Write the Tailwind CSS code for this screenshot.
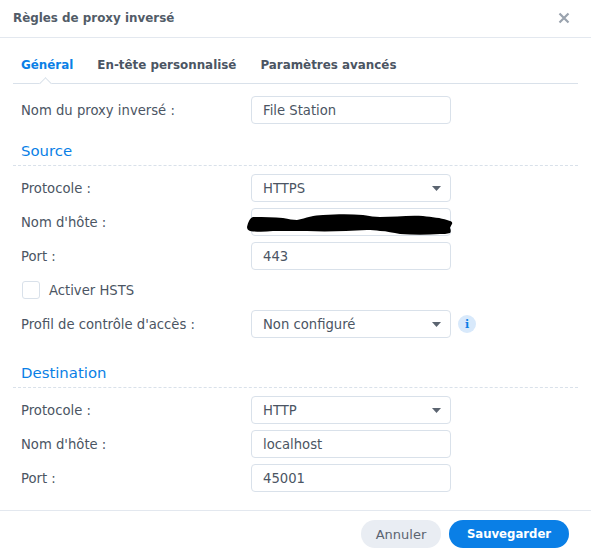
<!doctype html>
<html>
  <head>
    <title>Règles de proxy inversé</title>
    <meta charset="UTF-8" />
    <script src="https://cdn.jsdelivr.net/npm/@tailwindcss/browser@4"></script>
  </head>
  <body class="bg-white font-['DejaVu_Sans',sans-serif] text-[13.2px] text-[#4b5563]">
    <div class="w-[591px] h-[555px] flex flex-col overflow-hidden">
      <!--Title-->
      <div class="h-[38px] shrink-0 border-b border-[#e3e8ef] pl-[13px] pr-[20px] flex items-center justify-between">
        <h1 class="font-bold text-[11.9px] text-[#525c68]">Règles de proxy inversé</h1>
        <svg width="12" height="12" viewBox="0 0 12 12" class="mr-[1px] mt-[-2px]">
          <path d="M1.5 1.5l9 9M10.5 1.5l-9 9" stroke="#9aa3ae" stroke-width="2.2" fill="none" />
        </svg>
      </div>
      <div class="grow px-[13px] flex flex-col">
        <!--Tabs-->
        <div class="h-[46px] shrink-0 border-b border-[#d9e1ea] flex items-center gap-[24px] pl-[8px] pt-[10px] font-bold text-[11.9px] relative">
          <span class="text-[#0a7fe6]">Général</span>
          <span>En-tête personnalisé</span>
          <span>Paramètres avancés</span>
          <div class="absolute left-[28px] bottom-[-5px] w-[9px] h-[9px] rotate-45 bg-white border-l border-t border-[#d9e1ea]"></div>
        </div>
        <div class="pl-[8px] pt-[12px]">
          <div class="flex items-center h-[28px]">
            <label class="w-[230px] pt-[2px]">Nom du proxy inversé :</label>
            <div class="w-[200px] h-[28px] border border-[#d9e1ea] rounded-[4px] px-[11px] pt-[2px] flex items-center">File Station</div>
          </div>
          <h2 class="text-[14.9px] text-[#0a7fe6] mt-[15px] pt-[1px] h-[26px] leading-[22px]">Source</h2>
          <div class="border-b border-dashed border-[#d9e1ea] -ml-[8px] mb-[8px]"></div>
          <div class="flex flex-col gap-[6px]">
            <div class="flex items-center h-[28px]">
              <label class="w-[230px] pt-[2px]">Protocole :</label>
              <div class="w-[200px] h-[28px] border border-[#d9e1ea] rounded-[4px] pl-[11px] pr-[9px] flex items-center justify-between">
                <span class="pt-[2px]">HTTPS</span>
                <svg width="9" height="5" viewBox="0 0 9 5"><path d="M0 0h9L4.5 5z" fill="#5b6470" /></svg>
              </div>
            </div>
            <div class="flex items-center h-[28px]">
              <label class="w-[230px] pt-[2px]">Nom d'hôte :</label>
              <div class="w-[200px] h-[28px] border border-[#d9e1ea] rounded-[4px] relative">
                <svg width="210" height="26" viewBox="0 0 210 26" class="absolute left-[-6px] top-[2px]">
                  <path d="M1 16C2 11 4 7 7 6C17 6 28 6 37 7C43 8 47 9 51 9C60 7 68 4 77 4C92 3 105 3 117 4C124 5 129 6 134 6C148 6 163 4 177 5C186 6 195 7 201 9C205 10 207 11 206 13C205 15 204 16 204 17C205 19 205 21 204 22C201 23 197 23 194 23C181 24 167 24 154 23C147 22 141 20 134 20C130 19 125 19 121 19C101 20 81 21 61 20C49 20 38 20 27 20C19 21 10 21 4 20C2 19 1 18 1 16Z" fill="#000" />
                </svg>
              </div>
            </div>
            <div class="flex items-center h-[28px]">
              <label class="w-[230px] pt-[2px]">Port :</label>
              <div class="w-[200px] h-[28px] border border-[#d9e1ea] rounded-[4px] px-[11px] pt-[2px] flex items-center">443</div>
            </div>
          </div>
          <div class="flex items-center h-[18px] mt-[11px] mb-[11px] gap-[9px] ml-[1px]">
            <div class="w-[18px] h-[18px] border border-[#d9e1ea] rounded-[3px]"></div>
            <span class="pt-[2px]">Activer HSTS</span>
          </div>
          <div class="flex items-center h-[28px]">
            <label class="w-[230px] pt-[2px]">Profil de contrôle d'accès :</label>
            <div class="w-[200px] h-[28px] border border-[#d9e1ea] rounded-[4px] pl-[11px] pr-[9px] flex items-center justify-between">
              <span class="pt-[2px]">Non configuré</span>
              <svg width="9" height="5" viewBox="0 0 9 5"><path d="M0 0h9L4.5 5z" fill="#5b6470" /></svg>
            </div>
            <div class="ml-[7px] w-[18px] h-[18px] rounded-full bg-[#d8e9fb] flex items-center justify-center text-[#0a7fe6] text-[11px] font-bold font-['DejaVu_Serif',serif] leading-none">i</div>
          </div>
          <h2 class="text-[14.9px] text-[#0a7fe6] mt-[23px] pt-[1px] h-[26px] leading-[22px]">Destination</h2>
          <div class="border-b border-dashed border-[#d9e1ea] -ml-[8px] mb-[8px]"></div>
          <div class="flex flex-col gap-[6px]">
            <div class="flex items-center h-[28px]">
              <label class="w-[230px] pt-[2px]">Protocole :</label>
              <div class="w-[200px] h-[28px] border border-[#d9e1ea] rounded-[4px] pl-[11px] pr-[9px] flex items-center justify-between">
                <span class="pt-[2px]">HTTP</span>
                <svg width="9" height="5" viewBox="0 0 9 5"><path d="M0 0h9L4.5 5z" fill="#5b6470" /></svg>
              </div>
            </div>
            <div class="flex items-center h-[28px]">
              <label class="w-[230px] pt-[2px]">Nom d'hôte :</label>
              <div class="w-[200px] h-[28px] border border-[#d9e1ea] rounded-[4px] px-[11px] pt-[2px] flex items-center">localhost</div>
            </div>
            <div class="flex items-center h-[28px]">
              <label class="w-[230px] pt-[2px]">Port :</label>
              <div class="w-[200px] h-[28px] border border-[#d9e1ea] rounded-[4px] px-[11px] pt-[2px] flex items-center">45001</div>
            </div>
          </div>
        </div>
      </div>
      <!--Footer-->
      <div class="h-[45px] shrink-0 border-t border-[#e3e8ef] pr-[22px] flex justify-end items-start pt-[9px] gap-[8px]">
        <button class="w-[80px] h-[28px] rounded-full bg-[#e9edf3] text-[#5b6470] text-[13px] pt-[2px]">Annuler</button>
        <button class="w-[120px] h-[28px] rounded-full bg-[#0a7fe6] text-white font-bold text-[11.7px] pt-[2px]">Sauvegarder</button>
      </div>
    </div>
  </body>
</html>
